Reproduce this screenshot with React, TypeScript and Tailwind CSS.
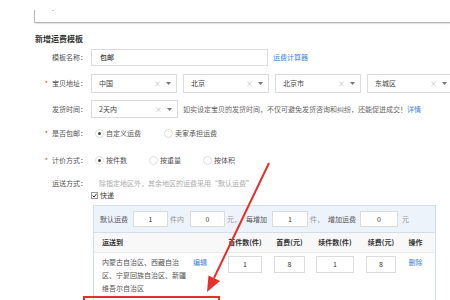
import type { ReactNode } from 'react'

function Caret() {
  return (
    <svg width="5" height="3" viewBox="0 0 5 3" className="block">
      <path d="M0 0h5L2.5 3z" fill="#777" />
    </svg>
  )
}

function Select({ value, className }: { value: string; className: string }) {
  return (
    <div
      className={`flex shrink-0 items-center justify-between border border-[#dcdcdc] bg-white pl-[7px] pr-[5px] ${className}`}
    >
      <span className="text-[7px] text-[#444]">{value}</span>
      <span className="flex items-center gap-[5px]">
        <span className="text-[7px] leading-none text-[#b5b5b5]">×</span>
        <Caret />
      </span>
    </div>
  )
}

function Label({ text, required }: { text: string; required?: boolean }) {
  return (
    <div className="flex w-[52px] shrink-0 items-center justify-end whitespace-nowrap text-[7px] text-[#555]">
      {required && <span className="mr-[4px] text-[#e4393c]">*</span>}
      {text}：
    </div>
  )
}

function Radio({ label, checked }: { label: string; checked?: boolean }) {
  return (
    <span className="flex items-center gap-[2px]">
      <span className="flex h-[9px] w-[9px] items-center justify-center rounded-full border border-[#dedede]">
        {checked && <span className="h-[3px] w-[3px] rounded-full bg-[#444]" />}
      </span>
      <span className="text-[7px] text-[#555]">{label}</span>
    </span>
  )
}

function Num({ value, className }: { value: string; className: string }) {
  return (
    <div
      className={`flex shrink-0 items-center justify-center border border-[#dcdcdc] bg-white text-[7px] text-[#333] ${className}`}
    >
      {value}
    </div>
  )
}

function Unit({ children, className = '' }: { children: ReactNode; className?: string }) {
  return <span className={`shrink-0 whitespace-nowrap text-[7px] ${className}`}>{children}</span>
}

export default function App() {
  return (
    <div className="relative h-[300px] w-[450px] overflow-hidden bg-white font-['Noto_Sans_CJK_SC','Noto_Sans',sans-serif]">
      {/* previous card edge */}
      <div className="ml-[34px] mt-[10px] h-[13px] rounded-bl-[2px] border-b border-l border-[#b5b5b5] shadow-[0_1px_1px_rgba(0,0,0,0.12)]">
        <div className="ml-[17px] mt-[3px] h-px w-[2px] bg-[#cfcfcf]" />
      </div>

      <div className="pl-[35px]">
        <h2 className="mt-[10px] text-[8px] font-bold leading-[11px] text-[#333]">新增运费模板</h2>

        <div className="mt-[5px] flex h-[17px] items-center">
          <Label text="模板名称" />
          <div className="ml-[4px] flex h-full w-[177px] shrink-0 items-center border border-[#dcdcdc] pl-[8px] text-[7px] font-medium text-[#333]">
            包邮
          </div>
          <span className="ml-[5px] text-[7px] text-[#3d7fd9]">运费计算器</span>
        </div>

        <div className="mt-[8px] flex h-[19px] items-center">
          <Label text="宝贝地址" required />
          <div className="ml-[4px] flex h-full shrink-0 gap-[6px]">
            <Select value="中国" className="h-full w-[86px]" />
            <Select value="北京" className="h-full w-[86px]" />
            <Select value="北京市" className="h-full w-[86px]" />
            <Select value="东城区" className="h-full w-[86px]" />
          </div>
        </div>

        <div className="mt-[7px] flex h-[18px] items-center">
          <Label text="发货时间" />
          <Select value="2天内" className="ml-[4px] h-full w-[87px]" />
          <span className="ml-[5px] whitespace-nowrap text-[7px] text-[#666]">
            如实设定宝贝的发货时间，不仅可避免发货咨询和纠纷，还能促进成交！
            <span className="text-[#3d7fd9]">详情</span>
          </span>
        </div>

        <div className="mt-[8px] flex h-[14px] items-center">
          <Label text="是否包邮" required />
          <div className="ml-[8px] flex gap-[23px]">
            <Radio label="自定义运费" checked />
            <Radio label="卖家承担运费" />
          </div>
        </div>

        <div className="mt-[13px] flex h-[14px] items-center">
          <Label text="计价方式" required />
          <div className="ml-[8px] flex gap-[22px]">
            <Radio label="按件数" checked />
            <Radio label="按重量" />
            <Radio label="按体积" />
          </div>
        </div>

        <div className="mt-[9px] flex items-start">
          <div className="flex h-[14px] items-center">
            <Label text="运送方式" />
          </div>
          <div className="ml-[4px] flex flex-col">
            <div className="flex h-[14px] items-center whitespace-nowrap pl-[8px] text-[7px] text-[#aaa]">
              除指定地区外，其余地区的运费采用“默认运费”
            </div>
            <div className="flex h-[10px] items-center gap-[2px]">
              <span className="flex h-[7px] w-[7px] items-center justify-center border border-[#999] bg-white">
                <svg width="5" height="5" viewBox="0 0 5 5">
                  <path d="M0.6 2.6 2 4 4.5 0.8" fill="none" stroke="#333" strokeWidth="1" />
                </svg>
              </span>
              <span className="text-[7px] text-[#444]">快递</span>
            </div>

            <div className="ml-[2px] mt-[5px] w-[343px] border border-[#d3deea]">
              <div className="flex h-[27px] items-center border-b border-[#d3deea] bg-[#edf3fb] pl-[6px]">
                <Unit className="text-[#555]">默认运费</Unit>
                <Num value="1" className="ml-[5px] h-[16px] w-[35px]" />
                <Unit className="ml-[2px] text-[#999]">件内</Unit>
                <Num value="0" className="ml-[6px] h-[16px] w-[35px]" />
                <Unit className="ml-[2px] text-[#999]">元，</Unit>
                <Unit className="ml-[5px] text-[#555]">每增加</Unit>
                <Num value="1" className="ml-[5px] h-[16px] w-[36px]" />
                <Unit className="ml-[2px] text-[#999]">件，</Unit>
                <Unit className="ml-[4px] text-[#555]">增加运费</Unit>
                <Num value="0" className="ml-[4px] h-[16px] w-[38px]" />
                <Unit className="ml-[4px] text-[#999]">元</Unit>
              </div>

              <div className="flex h-[20px] items-center border-b border-[#ececec] bg-[#f8f8f8] text-[7px] font-bold text-[#333]">
                <div className="w-[129px] pl-[8px]">运送到</div>
                <div className="w-[44px] text-center">首件数(件)</div>
                <div className="w-[45px] text-center">首费(元)</div>
                <div className="w-[46px] text-center">续件数(件)</div>
                <div className="w-[46px] text-center">续费(元)</div>
                <div className="w-[31px] pr-[8px] text-center">操作</div>
              </div>

              <div className="flex items-start pt-[3px] text-[7px]">
                <div className="flex w-[129px] items-start pl-[8px]">
                  <div className="w-[84px] leading-[13px] text-[#555]">
                    <div>内蒙古自治区、西藏自治</div>
                    <div>区、宁夏回族自治区、新疆</div>
                    <div>维吾尔自治区</div>
                  </div>
                  <span className="ml-[7px] leading-[13px] text-[#3d7fd9]">编辑</span>
                </div>
                <div className="flex w-[44px] justify-center">
                  <Num value="1" className="h-[17px] w-[34px]" />
                </div>
                <div className="flex w-[45px] justify-center">
                  <Num value="8" className="h-[17px] w-[31px]" />
                </div>
                <div className="flex w-[46px] justify-center">
                  <Num value="1" className="h-[17px] w-[38px]" />
                </div>
                <div className="flex w-[46px] justify-center">
                  <Num value="8" className="h-[17px] w-[30px]" />
                </div>
                <div className="w-[31px] pr-[8px] text-center leading-[13px] text-[#3d7fd9]">删除</div>
              </div>
              <div className="h-[20px]" />
            </div>
          </div>
        </div>
      </div>

      {/* annotation overlay */}
      <svg className="pointer-events-none absolute left-0 top-0" width="450" height="300" viewBox="0 0 450 300">
        <line x1="269" y1="163" x2="214" y2="278" stroke="#e5302b" strokeWidth="2" />
        <path d="M207 292 L220 281 L208.5 275.5 Z" fill="#e5302b" />
      </svg>
      <div className="pointer-events-none absolute left-[83px] top-[296px] h-[20px] w-[137px] border-2 border-[#e5302b]" />
    </div>
  )
}
